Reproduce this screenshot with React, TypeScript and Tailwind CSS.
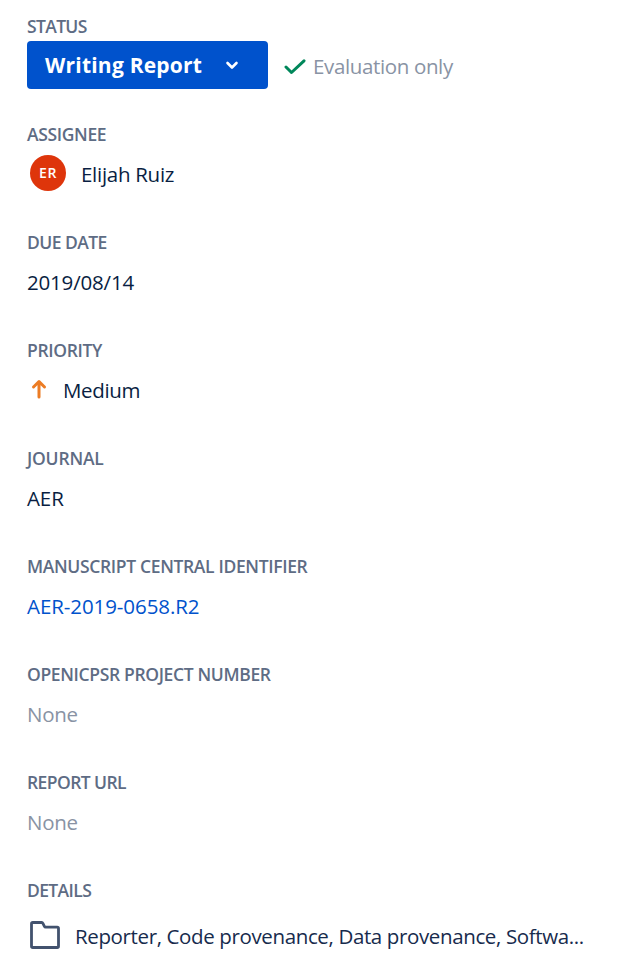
import type { ReactNode } from 'react';

function Field({ label, labelClass, children }: { label: string; labelClass: string; children: ReactNode }) {
  return (
    <section className="h-[108px]">
      <h2 className={`h-6 text-[17.5px] leading-6 font-semibold whitespace-nowrap text-[#5e6c84] ${labelClass}`}>
        {label}
      </h2>
      <div className="mt-1 flex h-12 items-center whitespace-nowrap">{children}</div>
    </section>
  );
}

export default function App() {
  return (
    <main className="h-[958px] w-full overflow-hidden bg-white pt-[14px] pl-[27px] font-['Open_Sans','Noto_Sans',sans-serif] text-[20.5px] leading-6 text-[#091e42]">
      <Field label="STATUS" labelClass="tracking-[-0.65px]">
        <button className="-mt-0.5 flex h-12 w-[241px] items-center rounded-[4px] bg-[#0052cc] pl-[18px] text-[21px] font-bold text-white">
          <span className="tracking-[0.22px]">Writing Report</span>
          <svg className="ml-auto mr-[29px]" width="14" height="10" viewBox="0 0 14 10" fill="none">
            <path d="M2.5 3 7 7.5 11.5 3" stroke="currentColor" strokeWidth="2.6" strokeLinecap="round" strokeLinejoin="round" />
          </svg>
        </button>
        <svg className="ml-4 mt-px" width="22" height="16" viewBox="0 0 22 16" fill="none">
          <path d="m2 8 5.5 5.5L20 1.8" stroke="#00875a" strokeWidth="3" strokeLinecap="round" strokeLinejoin="round" />
        </svg>
        <span className="ml-[7px] -mt-px tracking-[-0.36px] text-[#8993a4]">Evaluation only</span>
      </Field>

      <Field label="ASSIGNEE" labelClass="tracking-[-0.35px]">
        <span className="ml-[3px] mt-[-3px] flex size-9 items-center justify-center rounded-full bg-[#de350b] text-[14px] font-semibold tracking-[0.5px] text-white">
          ER
        </span>
        <span className="ml-[15px] -mt-px tracking-[-0.28px]">Elijah Ruiz</span>
      </Field>

      <Field label="DUE DATE" labelClass="tracking-[-0.55px]">
        <span className="-mt-px tracking-[-0.18px]">2019/08/14</span>
      </Field>

      <Field label="PRIORITY" labelClass="tracking-[-0.35px]">
        <svg className="ml-[4px] -mt-[3px]" width="16" height="20" viewBox="0 0 16 20" fill="none">
          <path d="M8 18V3M2.5 8 8 2.5 13.5 8" stroke="#ec7c24" strokeWidth="3" strokeLinecap="round" strokeLinejoin="round" />
        </svg>
        <span className="ml-4 -mt-px tracking-[-0.36px]">Medium</span>
      </Field>

      <Field label="JOURNAL" labelClass="tracking-[-0.2px]">
        <span className="-mt-px tracking-[-0.1px]">AER</span>
      </Field>

      <Field label="MANUSCRIPT CENTRAL IDENTIFIER" labelClass="tracking-[-0.35px]">
        <a className="-mt-px tracking-[-0.08px] text-[#0052cc]">AER-2019-0658.R2</a>
      </Field>

      <Field label="OPENICPSR PROJECT NUMBER" labelClass="tracking-[-0.35px]">
        <span className="-mt-px tracking-[-0.3px] text-[#8993a4]">None</span>
      </Field>

      <Field label="REPORT URL" labelClass="tracking-[-0.58px]">
        <span className="-mt-px tracking-[-0.3px] text-[#8993a4]">None</span>
      </Field>

      <Field label="DETAILS" labelClass="tracking-[-0.62px]">
        <svg className="ml-[3px] mt-[9px]" width="30" height="28" viewBox="0 0 30 28" fill="none">
          <path
            d="M2.8 1.5h8.9q.8 0 1.2.8l1.5 3q.4.8 1.2.8h11.6q1.3 0 1.3 1.3v17.8q0 1.3-1.3 1.3H2.8q-1.3 0-1.3-1.3V2.8Q1.5 1.5 2.8 1.5Z"
            stroke="#42526e"
            strokeWidth="2.8"
            strokeLinejoin="round"
          />
        </svg>
        <span className="ml-[15px] mt-[11px] tracking-[-0.37px] text-[#172b4d]">Reporter, Code provenance, Data provenance, Softwa...</span>
      </Field>
    </main>
  );
}
